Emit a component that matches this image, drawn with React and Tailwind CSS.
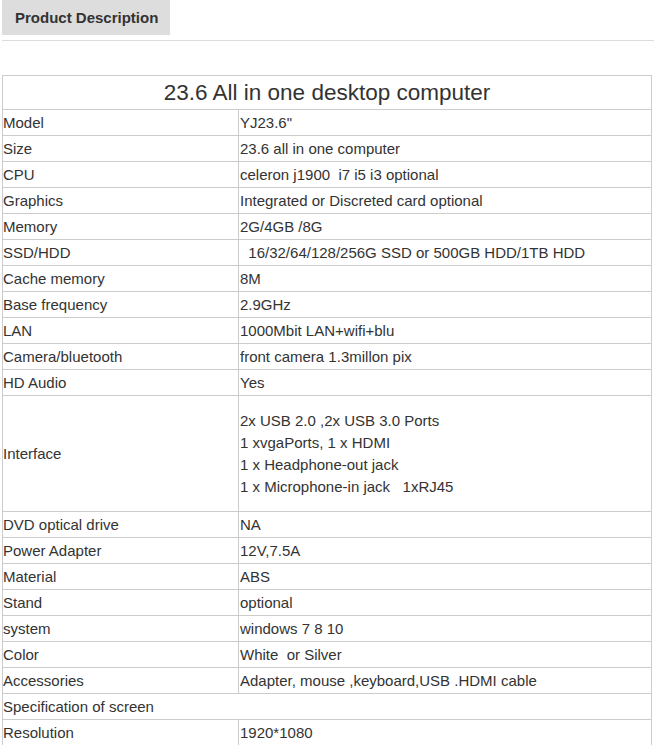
import React from 'react';

const ROWS = [
  ['Model', 'YJ23.6"'],
  ['Size', '23.6 all in one computer'],
  ['CPU', 'celeron j1900  i7 i5 i3 optional'],
  ['Graphics', 'Integrated or Discreted card optional'],
  ['Memory', '2G/4GB /8G'],
  ['SSD/HDD', '  16/32/64/128/256G SSD or 500GB HDD/1TB HDD'],
  ['Cache memory', '8M'],
  ['Base frequency', '2.9GHz'],
  ['LAN', '1000Mbit LAN+wifi+blu'],
  ['Camera/bluetooth', 'front camera 1.3millon pix'],
  ['HD Audio', 'Yes'],
];

const INTERFACE = [
  '2x USB 2.0 ,2x USB 3.0 Ports',
  '1 xvgaPorts, 1 x HDMI',
  '1 x Headphone-out jack',
  '1 x Microphone-in jack   1xRJ45',
];

const ROWS2 = [
  ['DVD optical drive', 'NA'],
  ['Power Adapter', '12V,7.5A'],
  ['Material', 'ABS'],
  ['Stand', 'optional'],
  ['system', 'windows 7 8 10'],
  ['Color', 'White  or Silver'],
  ['Accessories', 'Adapter, mouse ,keyboard,USB .HDMI cable'],
];

const td = 'border border-[#cccccc] px-0 py-0 h-[25px] leading-[25px] whitespace-pre align-middle';

function Row({ label, value }) {
  return (
    <tr>
      <td className={td}>{label}</td>
      <td className={`${td} pl-[1px]`}>{value}</td>
    </tr>
  );
}

export default function App() {
  return (
    <div className="bg-white min-h-[745px] font-['Liberation_Sans',Arial,sans-serif] text-[#333333]">
      <div className="pl-[2px]">
        <div className="w-[168px] h-[35px] bg-[#dddddd] pl-[13px] text-[15px] font-bold leading-[35px] text-[#333333]">
          Product Description
        </div>
        <div className="mt-[5px] border-t border-[#dddddd]" />
      </div>

      <table className="ml-[2px] mt-[34px] w-[650px] border-collapse table-fixed text-[15px]">
        <colgroup>
          <col className="w-[236px]" />
          <col />
        </colgroup>
        <tbody>
          <tr>
            <td colSpan={2} className="border border-[#cccccc] text-center text-[22.5px] leading-[33px] p-0">
              23.6 All in one desktop computer
            </td>
          </tr>
          {ROWS.map(r => <Row key={r[0]} label={r[0]} value={r[1]} />)}
          <tr>
            <td className={td}>Interface</td>
            <td className="border border-[#cccccc] pl-[1px] pt-[14px] pb-[13px] leading-[22px] whitespace-pre align-middle">
              {INTERFACE.map(l => <div key={l}>{l}</div>)}
            </td>
          </tr>
          {ROWS2.map(r => <Row key={r[0]} label={r[0]} value={r[1]} />)}
          <tr>
            <td colSpan={2} className={td}>Specification of screen</td>
          </tr>
          <Row label="Resolution" value="1920*1080" />
        </tbody>
      </table>
    </div>
  );
}
